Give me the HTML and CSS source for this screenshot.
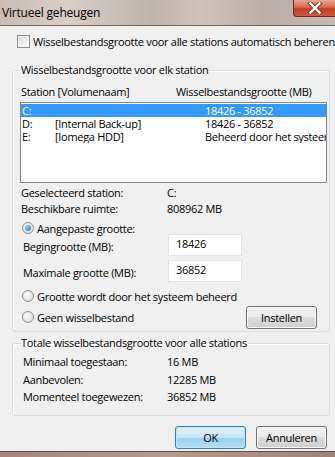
FILE: index.html
```html
<!DOCTYPE html>
<html>
<head>
<meta charset="utf-8">
<link rel="stylesheet" href="styles.css">
</head>
<body>
<div class="window">
  <div class="titlebar">
    <span class="title">Virtueel geheugen</span>
    <div class="close"><svg width="16" height="12" viewBox="0 0 16 12"><path d="M3.5 1.5 L12.5 10.5 M12.5 1.5 L3.5 10.5" stroke="#6b3a30" stroke-width="4.2" stroke-linecap="square"/><path d="M3.5 1.5 L12.5 10.5 M12.5 1.5 L3.5 10.5" stroke="#fff" stroke-width="2.4" stroke-linecap="square"/></svg></div>
  </div>
  <div class="content">
    <label class="auto"><span class="checkbox"></span>Wisselbestandsgrootte voor alle stations automatisch beheren</label>

    <fieldset class="group g1">
      <legend>Wisselbestandsgrootte voor elk station</legend>
      <div class="cols"><span class="lab">Station [Volumenaam]</span><span>Wisselbestandsgrootte (MB)</span></div>
      <div class="list">
        <div class="row sel"><span class="c1">C:</span><span class="c2"></span><span class="c3">18426 - 36852</span></div>
        <div class="row"><span class="c1">D:</span><span class="c2">[Internal Back-up]</span><span class="c3">18426 - 36852</span></div>
        <div class="row"><span class="c1">E:</span><span class="c2">[Iomega HDD]</span><span class="c3 cut">Beheerd door het systeem</span></div>
      </div>
      <div class="info first"><span class="lab">Geselecteerd station:</span><span>C:</span></div>
      <div class="info"><span class="lab">Beschikbare ruimte:</span><span>808962 MB</span></div>
      <label class="radio r1"><span class="rb on"></span>Aangepaste grootte:</label>
      <div class="field f1"><span class="lab">Begingrootte (MB):</span><span class="input">18426</span></div>
      <div class="field f2"><span class="lab">Maximale grootte (MB):</span><span class="input">36852</span></div>
      <label class="radio r2"><span class="rb"></span>Grootte wordt door het systeem beheerd</label>
      <div class="lastrow">
        <label class="radio"><span class="rb"></span>Geen wisselbestand</label>
        <span class="btn">Instellen</span>
      </div>
    </fieldset>

    <fieldset class="group g2">
      <legend>Totale wisselbestandsgrootte voor alle stations</legend>
      <div class="tot first"><span class="lab">Minimaal toegestaan:</span><span>16 MB</span></div>
      <div class="tot"><span class="lab">Aanbevolen:</span><span>12285 MB</span></div>
      <div class="tot"><span class="lab">Momenteel toegewezen:</span><span>36852 MB</span></div>
    </fieldset>

    <div class="buttons">
      <span class="btn ok">OK</span>
      <span class="btn">Annuleren</span>
    </div>
  </div>
  <div class="bottomedge"></div>
</div>
</body>
</html>
```
FILE: styles.css
```css
* { box-sizing: border-box; }
html, body { margin: 0; padding: 0; }
body {
  width: 335px;
  height: 457px;
  overflow: hidden;
  font-family: "Open Sans", "DejaVu Sans", sans-serif;
  font-size: 11px;
  letter-spacing: -0.3px;
  color: #000;
  background: #f0f0f0;
}
.window { position: relative; width: 335px; height: 457px; display: flex; flex-direction: column; }
.titlebar {
  position: relative;
  height: 26px;
  flex: none;
  background: linear-gradient(90deg, #c9bdb6 0%, #d8cec8 20%, #bfb3ad 45%, #cfc3bc 60%, #b9ada6 80%, #c7bcb6 100%);
  border-bottom: 1px solid #6d6560;
}
.title {
  position: absolute;
  left: 2px;
  top: 4px;
  font-size: 12px;
  letter-spacing: -0.2px;
}
.close {
  position: absolute;
  right: 0;
  top: 0;
  width: 42px;
  height: 17px;
  border: 1px solid #6a2a20;
  border-top: none;
  border-right: none;
  border-radius: 0 0 0 4px;
  background: linear-gradient(180deg, #e8a796 0%, #d46a4f 45%, #c23e22 55%, #d05a3a 100%);
  display: flex;
  align-items: center;
  justify-content: center;
}
.content { flex: 1; padding: 8px 0 0 12px; position: relative; }
.auto { display: flex; align-items: center; height: 14px; margin-left: 5px; white-space: nowrap; }
.checkbox {
  flex: none;
  width: 13px; height: 13px; border: 1px solid #8e8f8f; margin-right: 3px;
  background: linear-gradient(135deg, #dcdcdc, #fbfbfb);
  box-shadow: inset 0 0 0 1px #f4f4f4;
}
.group {
  margin: 0;
  min-width: 0;
  width: 318px;
  border: 1px solid #d5dfe5;
  border-radius: 3px;
  padding: 0 2px 0 7px;
  box-shadow: inset 1px 1px 0 #fff;
}
.group legend { padding: 0 1px; margin-left: 0; font-size: 11px; line-height: 14px; }
.g1 { margin-top: 15px; padding-bottom: 3px; }
.cols { display: flex; height: 16px; align-items: center; margin-top: 6px; padding-left: 1px; white-space: nowrap; }
.cols .lab { width: 155px; flex: none; }
.list {
  margin-top: 3px;
  height: 81px;
  border: 1px solid #828790;
  background: #fff;
  padding-top: 1px;
  overflow: hidden;
}
.row { display: flex; height: 13px; line-height: 13px; white-space: nowrap; overflow: hidden; }
.row.sel { background: #3399ff; color: #fff; }
.c1 { width: 34px; padding-left: 1px; flex: none; }
.c2 { width: 150px; flex: none; }
.c3 { flex: 1; overflow: hidden; }
.info { display: flex; height: 16px; align-items: center; padding-left: 1px; }
.info .lab { width: 146px; flex: none; }
.info.first { margin-top: 1px; }
.radio { display: flex; align-items: center; height: 18px; white-space: nowrap; padding-left: 2px; }
.rb {
  flex: none;
  width: 12px; height: 12px; border-radius: 50%; border: 1px solid #8e8f8f; margin-right: 3px;
  background: radial-gradient(circle at 40% 40%, #fdfdfd, #d4d4d4);
  position: relative;
}
.rb.on::after {
  content: ""; position: absolute; left: 2px; top: 2px; width: 6px; height: 6px; border-radius: 50%;
  background: radial-gradient(circle at 35% 35%, #8fd0f6, #1b6fb8);
}
.r1 { margin-top: 3px; }
.field { display: flex; align-items: flex-start; height: 22px; padding-left: 3px; }
.field .lab { width: 145px; flex: none; padding-top: 6px; line-height: 14px; }
.f1 { margin-top: -3px; }
.f2 { margin-top: 4px; }
.field .input {
  width: 74px; height: 22px; border: 1px solid #e3e3e3; background: #fff;
  padding: 2px 0 0 7px; line-height: 14px;
}
.r2 { margin-top: 5px; }
.lastrow { display: flex; justify-content: space-between; align-items: center; height: 22px; padding-right: 10px; margin-top: 1px; }
.btn {
  display: flex; align-items: center; justify-content: center;
  height: 23px; width: 71px;
  border: 1px solid #707070; border-radius: 3px;
  background: linear-gradient(180deg, #f2f2f2 0%, #ebebeb 45%, #dddddd 50%, #cfcfcf 100%);
  box-shadow: inset 0 0 0 1px #fcfcfc;
}
.g2 { margin-top: 4px; padding-bottom: 9px; }
.tot { display: flex; height: 17.5px; align-items: center; padding-left: 3px; }
.tot .lab { width: 144px; flex: none; }
.tot.first { margin-top: 3px; }
.buttons { display: flex; justify-content: flex-end; gap: 10px; margin-top: 10px; padding-right: 8px; }
.btn.ok {
  border-color: #3c7fb1;
  background: linear-gradient(180deg, #e5f4fc 0%, #c4e5f6 50%, #98d1ef 51%, #b1dff5 100%);
  box-shadow: inset 0 0 0 1px #bfe6fa;
}
.bottomedge {
  height: 6px; flex: none;
  margin-top: auto;
  border-top: 1px solid #5b4c46;
  background: linear-gradient(90deg, #a7867a, #b49a8f, #9f8376);
}
```
